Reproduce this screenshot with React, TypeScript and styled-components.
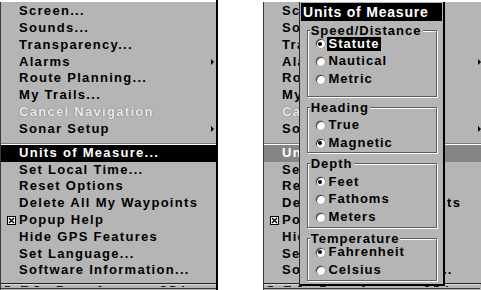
import React from 'react'
import styled, { createGlobalStyle } from 'styled-components'

const GlobalStyle = createGlobalStyle`
	* { box-sizing: border-box; }
	html, body { margin: 0; padding: 0; background: #fff; }
	body { font-family: "Liberation Sans", Arial, sans-serif; }
`

const GRAY = '#b5b5b5'

const Stage = styled.div`
	display: flex;
	gap: 45px;
	width: 481px;
	height: 290px;
	overflow: hidden;
`

const Screen = styled.div<{ $clip?: boolean }>`
	position: relative;
	flex: none;
	display: flex;
	flex-direction: column;
	width: ${p => (p.$clip ? '220px' : '218px')};
	height: 290px;
	border-right: ${p => (p.$clip ? 'none' : '2px solid #000')};
`

const MenuBox = styled.div`
	margin-top: 2px;
	height: 281px;
	padding-top: 1.3px;
	background: ${GRAY};
	border-left: 1px solid #3a3a3a;
	overflow: hidden;
`

const Row = styled.div<{ $hl?: 'focus' | 'dim'; $disabled?: boolean }>`
	display: flex;
	align-items: center;
	height: 16.8px;
	line-height: 16.8px;
	padding: 0 2.5px 0 18px;
	font-size: 13px;
	font-weight: bold;
	letter-spacing: 1.3px;
	white-space: nowrap;
	color: ${p => (p.$disabled ? '#ededed' : p.$hl ? '#fff' : '#000')};
	background: ${p => (p.$hl === 'focus' ? '#000' : p.$hl === 'dim' ? '#858585' : 'transparent')};
	text-shadow: ${p => (p.$disabled ? '0 0 1px #6e6e6e, 0 0 1px #6e6e6e' : 'none')};
`

const Arrow = styled.span`
	margin-left: auto;
	width: 0;
	height: 0;
	border-left: 3px solid #000;
	border-top: 3px solid transparent;
	border-bottom: 3px solid transparent;
`

const Check = styled.span`
	flex: none;
	width: 9px;
	height: 9px;
	margin: 0 3px 0 -12px;
	background: #fff;
	border: 1px solid #000;
	display: flex;
`

const Separator = styled.div`
	height: 7.2px;
	border-bottom: 1px solid #fff;
	box-shadow: inset 0 -1px 0 #7d7d7d;
`

const BottomEdge = styled.div`
	flex: 1;
	background: ${GRAY};
	border-top: 1px solid #222;
	border-left: 1px solid #3a3a3a;
	display: flex;
`

const Popup = styled.div`
	position: absolute;
	left: 36px;
	top: 2px;
	width: 146px;
	height: 284px;
	padding-top: 1px;
	background: ${GRAY};
	border-left: 1px solid #2a2a2a;
	border-right: 2px solid #000;
	border-bottom: 2px solid #000;
	display: flex;
	flex-direction: column;
`

const Title = styled.div`
	margin: 0 1px;
	height: 18px;
	line-height: 18px;
	padding-left: 2px;
	background: #000;
	color: #fff;
	font-size: 14px;
	font-weight: bold;
	letter-spacing: 0.8px;
	white-space: nowrap;
`

const Groups = styled.div`
	display: flex;
	flex-direction: column;
	gap: 3.5px;
	margin-top: 2.7px;
	padding-left: 6.7px;
`

const Group = styled.fieldset<{ $pb: number }>`
	width: 130px;
	min-width: 0;
	margin: 0;
	padding: 0 0 ${p => p.$pb}px 0;
	border: 1px solid #5e5e5e;
	box-shadow: 1px 1px 0 #fff, inset 1px 1px 0 #fff;
`

const Legend = styled.legend`
	margin-left: 2px;
	padding: 0 1px;
	background: ${GRAY};
	font-size: 13px;
	font-weight: bold;
	letter-spacing: 1px;
	line-height: 14px;
	white-space: nowrap;
`

const Options = styled.div<{ $mt: number }>`
	display: flex;
	flex-direction: column;
	margin-top: ${p => p.$mt}px;
`

const Option = styled.div`
	display: flex;
	align-items: center;
	gap: 2px;
	height: 17.8px;
	padding-left: 8.3px;
`

const Radio = styled.span<{ $on?: boolean }>`
	position: relative;
	flex: none;
	width: 9px;
	height: 9px;
	border-radius: 50%;
	background: #fff;
	box-shadow: inset 1px 1px 0 #3c3c3c, 0 0 0 0.5px #8a8a8a;

	&::after {
		content: '';
		display: ${p => (p.$on ? 'block' : 'none')};
		position: absolute;
		left: 2.5px;
		top: 2.5px;
		width: 4px;
		height: 4px;
		border-radius: 50%;
		background: #000;
	}
`

const Label = styled.span<{ $active?: boolean }>`
	padding: 0 1.5px;
	line-height: 14px;
	font-size: 13px;
	font-weight: bold;
	letter-spacing: 1px;
	white-space: nowrap;
	color: ${p => (p.$active ? '#fff' : '#000')};
	background: ${p => (p.$active ? '#000' : 'transparent')};
`

type Item = { label: string; sub?: boolean; disabled?: boolean; check?: boolean }

const first: Item[] = [
	{ label: 'Screen...' },
	{ label: 'Sounds...' },
	{ label: 'Transparency...' },
	{ label: 'Alarms', sub: true },
	{ label: 'Route Planning...' },
	{ label: 'My Trails...' },
	{ label: 'Cancel Navigation', disabled: true },
	{ label: 'Sonar Setup', sub: true },
]

const second: Item[] = [
	{ label: 'Units of Measure...' },
	{ label: 'Set Local Time...' },
	{ label: 'Reset Options' },
	{ label: 'Delete All My Waypoints' },
	{ label: 'Popup Help', check: true },
	{ label: 'Hide GPS Features' },
	{ label: 'Set Language...' },
	{ label: 'Software Information...' },
]

const groups = [
	{ name: 'Speed/Distance', opts: ['Statute', 'Nautical', 'Metric'], on: 0, mt: -3, pb: 8 },
	{ name: 'Heading', opts: ['True', 'Magnetic'], on: 1, mt: 2, pb: 0 },
	{ name: 'Depth', opts: ['Feet', 'Fathoms', 'Meters'], on: 0, mt: 2, pb: 1 },
	{ name: 'Temperature', opts: ['Fahrenheit', 'Celsius'], on: 0, mt: -2, pb: 1 },
]

const MenuRow = ({ item, hl }: { item: Item; hl?: 'focus' | 'dim' }) => (
	<Row $hl={hl} $disabled={item.disabled}>
		{item.check && (
			<Check>
				<svg width="7" height="7" viewBox="0 0 7 7">
					<path d="M1 1L6 6M6 1L1 6" stroke="#000" strokeWidth="1.4" />
				</svg>
			</Check>
		)}
		{item.label}
		{item.sub && <Arrow />}
	</Row>
)

const Dashes = () => (
	<svg width="216" height="6" viewBox="0 0 216 6">
		<rect x="0" y="0" width="216" height="1" fill="#dcdcdc" />
		<rect x="4" y="2" width="5" height="1" fill="#222" />
		<rect x="20" y="2" width="7" height="1" fill="#222" />
		<rect x="34" y="2" width="4" height="1" fill="#222" />
		<rect x="56" y="2" width="6" height="1" fill="#222" />
		<rect x="98" y="2" width="3" height="1" fill="#222" />
		<rect x="161" y="2" width="4" height="1" fill="#222" />
		<rect x="170" y="2" width="5" height="1" fill="#222" />
		<rect x="182" y="2" width="2" height="1" fill="#222" />
		<rect x="0" y="4" width="216" height="1" fill="#3a3a3a" />
	</svg>
)

const Menu = ({ hl }: { hl: 'focus' | 'dim' }) => (
	<>
		<MenuBox>
			{first.map(i => (
				<MenuRow key={i.label} item={i} />
			))}
			<Separator />
			{second.map((i, n) => (
				<MenuRow key={i.label} item={i} hl={n === 0 ? hl : undefined} />
			))}
		</MenuBox>
		<BottomEdge>
			<Dashes />
		</BottomEdge>
	</>
)

const App = () => (
	<>
		<GlobalStyle />
		<Stage>
			<Screen>
				<Menu hl="focus" />
			</Screen>
			<Screen $clip>
				<Menu hl="dim" />
				<Popup>
					<Title>Units of Measure</Title>
					<Groups>
						{groups.map(g => (
							<Group key={g.name} $pb={g.pb}>
								<Legend>{g.name}</Legend>
								<Options $mt={g.mt}>
									{g.opts.map((o, n) => (
										<Option key={o}>
											<Radio $on={n === g.on} />
											<Label $active={g.on === n && g.name === 'Speed/Distance'}>{o}</Label>
										</Option>
									))}
								</Options>
							</Group>
						))}
					</Groups>
				</Popup>
			</Screen>
		</Stage>
	</>
)

export default App
